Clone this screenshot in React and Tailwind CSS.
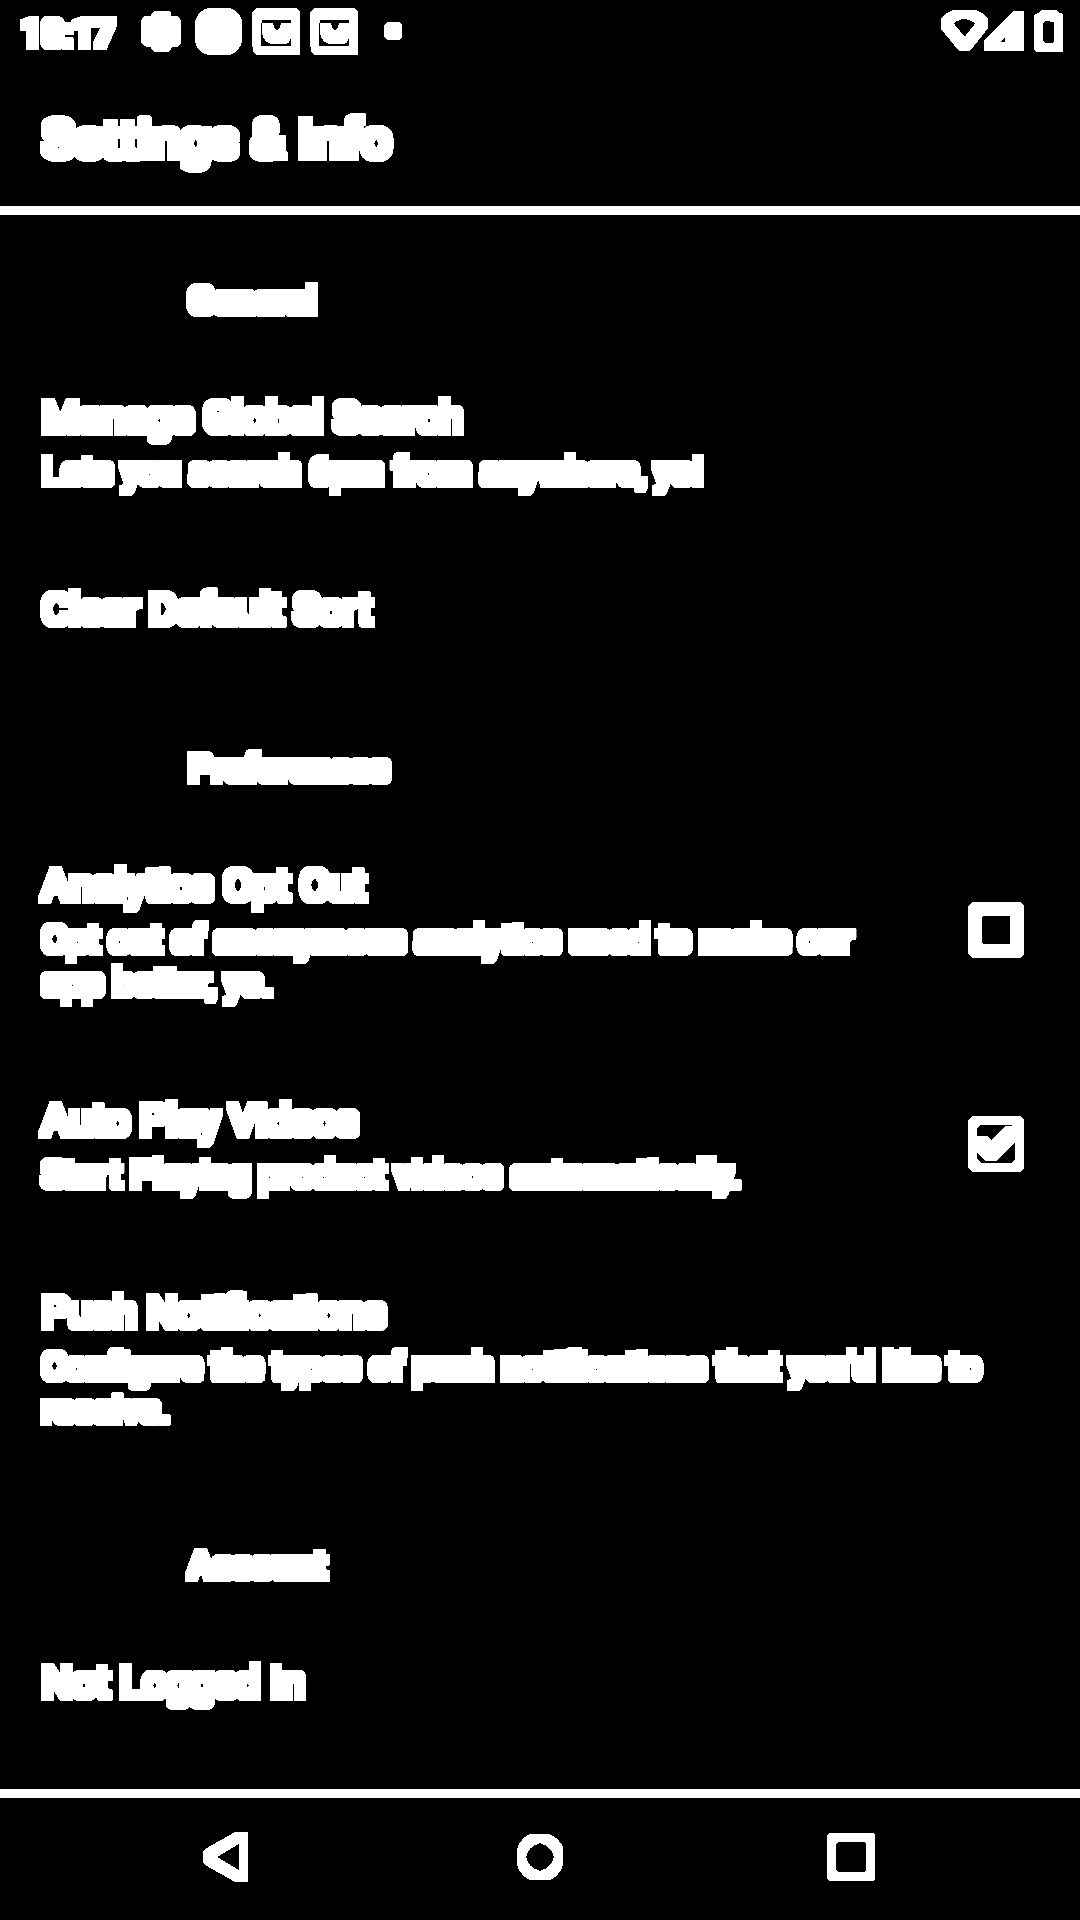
import React from "react";

// Thickens everything inside the filtered element by four pixels, with hard edges.
function BoldFilter() {
  return (
    <svg width="0" height="0" className="absolute" aria-hidden="true">
      <filter id="bold" x="-5%" y="-20%" width="110%" height="140%" colorInterpolationFilters="sRGB">
        <feComponentTransfer>
          <feFuncA type="linear" slope="40" intercept="-8" />
        </feComponentTransfer>
        <feMorphology operator="dilate" radius="4" />
      </filter>
    </svg>
  );
}

const APP_ICON =
  "M768 24h120l12 12v129H768l-9-9-3-30V36zM786 60v9h-3v68h90v-20h-3q-1 15-18 15h-36q-24-2-30-32V69h33l3 12 9 12 9-12 3-12h30v-9z";

function NotificationIcons() {
  return (
    <svg className="ml-[19px] h-[60px] w-[270px]" viewBox="405 0 810 180" fill="#fff" shapeRendering="crispEdges">
      <path d="M456 39l6-6h45l6 6v8h15q15 4 15 20v60q-2 12-15 14h-12l-6 11-6 4h-42l-6-6-3-9h-12q-15-3-18-18V68q2-18 15-21h15z" />
      <path d="M627 24h57q18 2 30 15 12 14 12 26v60q-3 15-14 26-13 13-28 14h-57q-18-3-29-15-12-13-13-28V68q2-16 14-29 12-13 28-15z" />
      <path fillRule="evenodd" d={APP_ICON} />
      <path transform="translate(174 0)" fillRule="evenodd" d={APP_ICON} />
      <path d="M1161 66h36l9 9v36l-9 9h-36l-9-9V75z" />
    </svg>
  );
}

function SystemIcons() {
  return (
    <svg className="ml-auto h-[60px] w-[140px]" viewBox="120 0 420 180" fill="#fff" shapeRendering="crispEdges">
      <path
        fillRule="evenodd"
        d="M123 56q9-15 36-26h69q27 10 36 26v29l-54 68h-33l-54-66zM161 70l33 40 32-40q-16-12-32-13-17 1-33 13z"
      />
      <path fillRule="evenodd" d="M252 122l87-89h33v120H252zM303 125h12v-12z" />
      <path
        fillRule="evenodd"
        d="M423 30h48l6 9h6l6 6v108l-3 3h-78l-6-6V45l12-6zM435 63l-6 6v54l6 6h24l3-4V69l-3-3h-9l-3-3z"
      />
    </svg>
  );
}

function Checkbox({ checked }) {
  return (
    <svg
      className={checked ? "mb-1 h-14 w-14 shrink-0" : "mb-[5px] h-14 w-14 shrink-0"}
      viewBox="0 0 168 168"
      fill="#fff"
      shapeRendering="crispEdges"
    >
      {checked ? (
        <path
          fillRule="evenodd"
          d="M12 0h144l12 12v144l-12 12H12L0 156V12zM36 27l-9 9v24h30l12 12 42-42h21v-3zM141 78l-57 57H51L27 111v18l12 12h90l12-12z"
        />
      ) : (
        <path
          fillRule="evenodd"
          d="M12 0h144l12 12v144l-12 12H12L0 156V12zM45 42l-3 3v78l3 3h78l3-3V45l-3-3z"
        />
      )}
    </svg>
  );
}

function Heading({ children }) {
  return (
    <h2 className="mb-[25px] pl-[188.5px] text-[36.75px] leading-[43px] font-medium tracking-[0.2px] [filter:url(#bold)]">
      {children}
    </h2>
  );
}

function Item({ title, children, control }) {
  return (
    <div className="flex items-center py-[46px] pr-14 pl-[42px]">
      <div className="grow whitespace-nowrap [filter:url(#bold)]">
        <div className="text-[42px] leading-[49px]">{title}</div>
        {children && <div className="mt-2 text-[36.75px] leading-[43px]">{children}</div>}
      </div>
      {control}
    </div>
  );
}

export default function App() {
  return (
    <div className="flex h-[1920px] w-[1080px] flex-col overflow-hidden bg-black font-['Roboto',sans-serif] text-white">
      <BoldFilter />
      <div className="flex h-[63px] items-start">
        <div className="w-[116px] pt-[12px] pl-[21px] text-[36.75px] leading-[43px] font-medium [filter:url(#bold)]">
          10:17
        </div>
        <NotificationIcons />
        <SystemIcons />
      </div>
      <header className="flex h-[152px] items-start border-b-[9px] border-white pt-[45px] pl-[42px]">
        <h1 className="text-[52.5px] leading-[62px] font-medium tracking-[0.2px] [filter:url(#bold)]">
          Settings &amp; Info
        </h1>
      </header>

      <main className="h-[1574px] pt-16">
        <section className="mb-[67px]">
          <Heading>General</Heading>
          <Item title="Manage Global Search">
            <p className="tracking-[0.11px]">
              Lets you search 6pm from anywhere, yo!
            </p>
          </Item>
          <Item title="Clear Default Sort" />
        </section>
        <section className="mb-[67px]">
          <Heading>Preferences</Heading>
          <Item title="Analytics Opt Out" control={<Checkbox />}>
            <p>Opt out of anonymous analytics used to make our</p>
            <p className="tracking-[0.16px]">app better, yo.</p>
          </Item>
          <Item title="Auto Play Videos" control={<Checkbox checked />}>
            <p className="tracking-[0.06px]">Start Playing product videos automatically.</p>
          </Item>
          <Item title="Push Notifications">
            <p className="tracking-[0.035px]">Configure the types of push notifications that you'd like to</p>
            <p className="tracking-[0.2px]">receive.</p>
          </Item>
        </section>
        <section>
          <Heading>Account</Heading>
          <Item title="Not Logged In" />
        </section>
      </main>

      <nav className="flex h-[131px] items-start border-t-[9px] border-white pt-[34px] pl-[203px]">
        <svg className="h-[50px] w-[45px]" viewBox="0 0 45 50" fill="#fff" shapeRendering="crispEdges">
          <path fillRule="evenodd" d="M32 0h12l1 1v48l-1 1H32L2 33l-2-3V20l2-3zM36 12L14 25l22 13z" />
        </svg>
        <svg className="mt-[2px] ml-[269px] h-[46px] w-[46px]" viewBox="0 0 46 46" fill="#fff" shapeRendering="crispEdges">
          <path
            fillRule="evenodd"
            d="M14 0h18q6 2 10 7 4 4 4 8v16q-1 5-5 9-4 5-9 6H14q-5-1-9-6-4-4-5-9V15q1-5 5-9 4-5 9-6zM23 9q-6 2-9.500 5.500-3.500 3.500-4.500 8.500 1 5 4.500 8.500 3.500 3.500 9.500 5.500 6-2 9.500-5.500 3.500-3.500 4.500-8.500-1-5-4.500-8.500-3.500-3.500-9.500-5.500z"
          />
        </svg>
        <svg className="mt-px ml-[264px] h-12 w-12" viewBox="0 0 48 48" fill="#fff" shapeRendering="crispEdges">
          <path
            fillRule="evenodd"
            d="M2 0h44l2 2v44l-2 2H2l-2-2V2zM11 9l-2 2v26l2 2h26l2-2V11l-2-2z"
          />
        </svg>
      </nav>
    </div>
  );
}
